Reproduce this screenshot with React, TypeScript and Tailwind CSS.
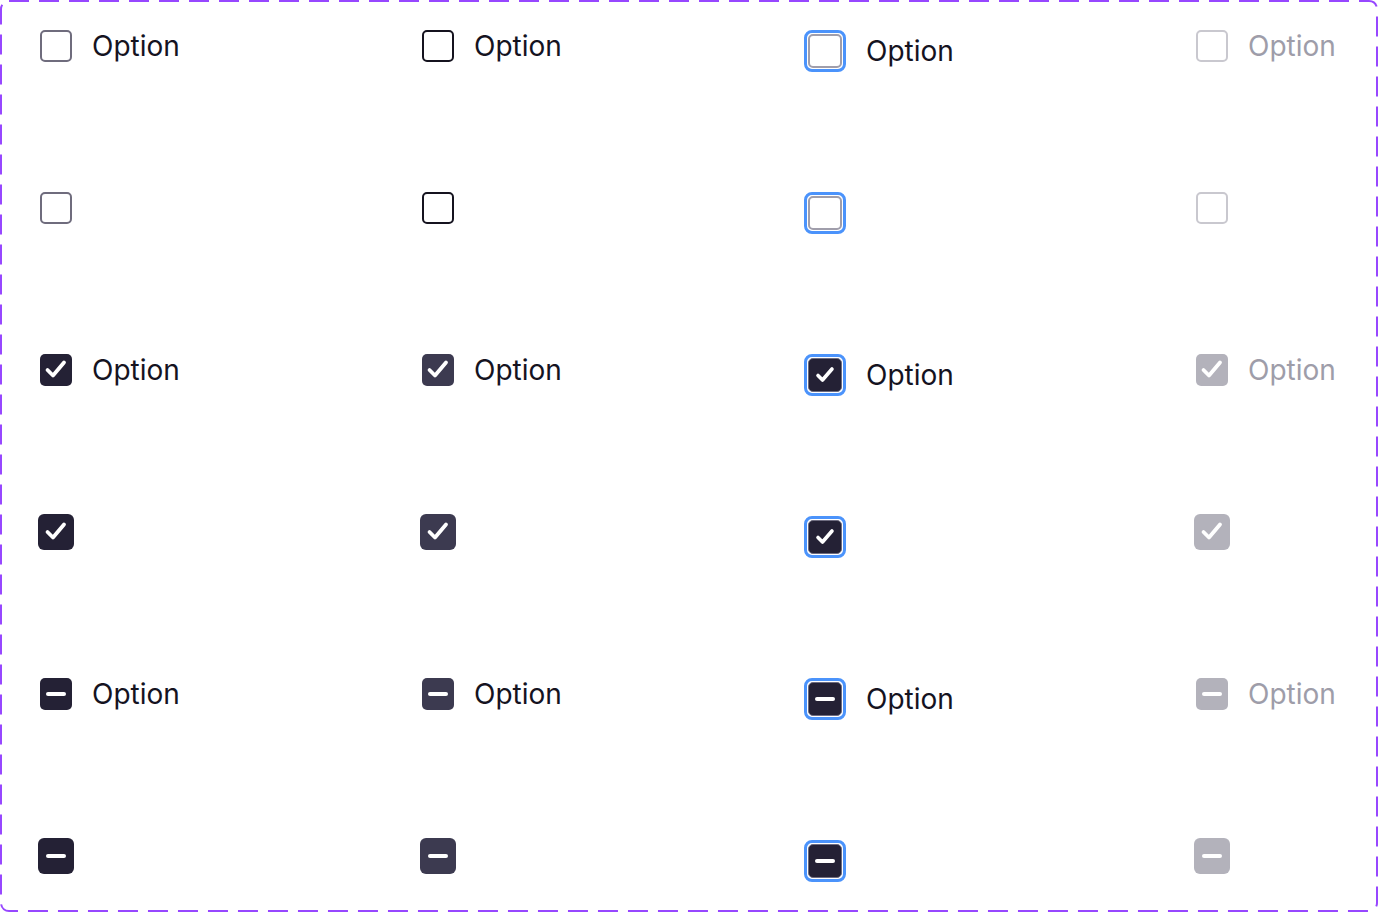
import React from "react";

type State = "unchecked" | "checked" | "indeterminate";
type Variant = "default" | "hover" | "focus" | "disabled";

const fillCls: Record<Variant, string> = {
  default: "bg-[#242135]",
  hover: "bg-[#3c3a50]",
  focus: "bg-[#242135]",
  disabled: "bg-[#b3b2bb]",
};

const borderCls: Record<Variant, string> = {
  default: "border-[#6f6c7d]",
  hover: "border-[#15131f]",
  focus: "border-[#a09eab]",
  disabled: "border-[#c9c8cf]",
};

const textCls: Record<Variant, string> = {
  default: "text-[#15131f]",
  hover: "text-[#15131f]",
  focus: "text-[#15131f]",
  disabled: "text-[#9e9da9]",
};

function CheckMark({ small }: { small?: boolean }) {
  return small ? (
    <svg width="32" height="32" viewBox="0 0 32 32" fill="none" className="shrink-0">
      <path d="M9 16.5 L13.5 21 L23 10" stroke="white" strokeWidth="3.6" strokeLinecap="round" strokeLinejoin="round" />
    </svg>
  ) : (
    <svg width="32" height="32" viewBox="0 0 32 32" fill="none" className="shrink-0">
      <path d="M7.5 16 L13 21.5 L24 8.5" stroke="white" strokeWidth="3.8" strokeLinecap="round" strokeLinejoin="round" />
    </svg>
  );
}

function Dash() {
  return <div className="w-5 h-1 rounded-full bg-white" />;
}

function Box({ state, variant, big, focus }: { state: State; variant: Variant; big?: boolean; focus?: boolean }) {
  const sz = focus ? "w-[34px] h-[34px] rounded-[5px]" : big ? "w-9 h-9 -mx-0.5 rounded-[6px]" : "w-8 h-8 rounded-[5px]";
  if (state === "unchecked") {
    return <div className={`${sz} shrink-0 border-2 bg-white ${borderCls[variant]}`} />;
  }
  return (
    <div className={`${sz} ${fillCls[variant]} flex items-center justify-center shrink-0 ${focus ? "border border-[#6e6c80]" : ""}`}>
      {state === "checked" ? <CheckMark small={focus} /> : <Dash />}
    </div>
  );
}

function Cell({ state, variant, label }: { state: State; variant: Variant; label: boolean }) {
  const big = !label && state !== "unchecked";
  const box =
    variant === "focus" ? (
      <div className="w-[42px] h-[42px] shrink-0 rounded-[8px] border-[3px] border-[#4b93fb] p-[1px] bg-white flex items-center justify-center">
        <Box state={state} variant={variant} focus />
      </div>
    ) : (
      <Box state={state} variant={variant} big={big} />
    );
  return (
    <div className={`flex items-center gap-5 ${variant === "focus" ? "h-[42px]" : "h-8"}`}>
      {box}
      {label && (
        <span className={`text-[28px] leading-none ${textCls[variant]}`} style={{ fontFamily: "Inter, sans-serif" }}>
          Option
        </span>
      )}
    </div>
  );
}

const rows: { state: State; label: boolean }[] = [
  { state: "unchecked", label: true },
  { state: "unchecked", label: false },
  { state: "checked", label: true },
  { state: "checked", label: false },
  { state: "indeterminate", label: true },
  { state: "indeterminate", label: false },
];

const variants: Variant[] = ["default", "hover", "focus", "disabled"];

export default function App() {
  return (
    <div className="relative w-[1378px] h-[912px] bg-white overflow-hidden" style={{ fontFamily: "Inter, sans-serif" }}>
      <svg className="absolute inset-0 pointer-events-none" width="1378" height="912">
        <rect x="1" y="1" width="1376" height="910" rx="8" fill="none" stroke="#9747ff" strokeWidth="2" strokeDasharray="20 10" />
      </svg>
      <div className="w-full h-full box-border pl-10 pt-[30px]">
        <div className="grid grid-cols-[140px_140px_150px_140px] gap-x-[242px] gap-y-[120px] items-start">
          {rows.map((r, ri) =>
            variants.map((v, vi) => <Cell key={`${ri}-${vi}`} state={r.state} variant={v} label={r.label} />)
          )}
        </div>
      </div>
    </div>
  );
}
